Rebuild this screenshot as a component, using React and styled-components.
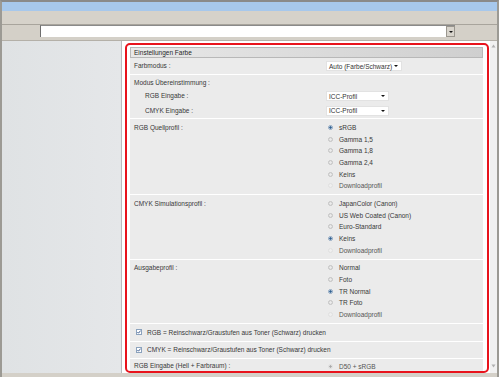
import React from "react";
import styled, { createGlobalStyle } from "styled-components";

const Global = createGlobalStyle`
  html, body { margin: 0; padding: 0; }
  body {
    width: 499px; height: 377px; overflow: hidden;
    font-family: "Liberation Sans", Arial, sans-serif;
    background: #d4d0c8;
  }
  * { box-sizing: border-box; }
`;

const Frame = styled.div`
  width: 499px; height: 377px;
  display: flex; flex-direction: column;
  border-top: 2px solid #8a8a8a;
  border-left: 2px solid #9c9a94;
  border-right: 2px solid #9c9a94;
  background: #d4d0c8;
`;

const TitleBar = styled.div`
  height: 9px; background: #a7c8ec;
`;

const MenuBar = styled.div`
  height: 13px; background: #d6d2ca;
`;

const ToolRow = styled.div`
  height: 16px;
  border-top: 1px solid #a8a49c;
  display: flex; align-items: flex-start;
  padding: 0 0 0 38px;
  background: #d4d0c8;
`;

const AddressBox = styled.div`
  width: 415px; height: 12px;
  display: flex;
  background: #fff;
  border-left: 1px solid #6e6e6e;
  border-top: 1px solid #8a8a8a;
`;

const AddressField = styled.div` flex: 1; `;

const DropButton = styled.div`
  width: 9px; height: 11px;
  background: #d8d4cc;
  border: 1px solid #9a968e;
  display: flex; align-items: center; justify-content: center;
`;

const Main = styled.div`
  height: 333px;
  display: flex;
  border-top: 1px solid #b4b0a8;
`;

const Sidebar = styled.div`
  width: 120px;
  background: linear-gradient(90deg, #dfe2e4, #e5e7e9);
  border-right: 1px solid #b9bbbd;
`;

const Content = styled.div`
  flex: 1;
  background: #fff;
  padding: 2px 1px 0 3px;
`;

const Scrollbar = styled.div`
  width: 7px;
  background: #f1f1f1;
  display: flex; flex-direction: column; justify-content: space-between;
  align-items: center;
  padding: 3px 0 5px;
`;

const Panel = styled.div`
  height: 330px;
  border: 2px solid #e8131c;
  border-radius: 5px;
  background: #fff;
  padding: 2px 4px 0 3px;
  overflow: hidden;
  color: #383838;
  font-size: 6.5px;
`;

const Header = styled.div`
  height: 11px;
  border: 1px solid #b8b8b8;
  background: linear-gradient(90deg, #e8e8e8, #cfcfcf);
  color: #262626;
  display: flex; align-items: center;
  padding-left: 3px;
`;

const Row = styled.div`
  display: grid;
  grid-template-columns: 196px 1fr;
  background: #ebebeb;
  border-bottom: 1px solid #ffffff;
  min-height: ${p => p.$h || 0}px;
  padding: ${p => p.$pad || "0"};
  align-items: ${p => p.$align || "center"};
`;

const Label = styled.div`
  padding-left: ${p => p.$indent || 4}px;
  line-height: ${p => p.$lh || 11.7}px;
`;

const Group = styled.div`
  background: #ebebeb;
  border-bottom: 1px solid #fff;
  padding-top: 2px;
`;

const SubRow = styled.div`
  display: grid;
  grid-template-columns: 196px 1fr;
  align-items: center;
  height: ${p => p.$h}px;
`;

const Select = styled.div`
  width: ${p => p.$w}px; height: 10px;
  background: #fff;
  border: 1px solid #e2e2e2;
  display: flex; align-items: center; justify-content: space-between;
  padding: 0 3px 0 2px;
  color: #333;
  white-space: nowrap;
`;

const Arrow = styled.span`
  width: 0; height: 0; flex: none;
  border-left: 2px solid transparent;
  border-right: 2px solid transparent;
  border-top: 2.5px solid #111;
`;

const Options = styled.div`
  display: flex; flex-direction: column;
`;

const Option = styled.div`
  display: flex; align-items: center;
  height: 11.7px;
  padding-left: 2px;
  gap: 6px;
  color: ${p => (p.$muted ? "#555" : "#383838")};
`;

const RadioDot = styled.span`
  width: 5px; height: 5px; border-radius: 50%;
  flex: none;
  border: 1px solid ${p => (p.$disabled ? "#e0e0e0" : p.$checked ? "#8ea6c0" : "#c2c2c2")};
  background: ${p =>
    p.$checked
      ? p.$disabled
        ? "radial-gradient(circle, #a8a8a8 45%, #dedede 55%)"
        : "radial-gradient(circle, #2e5f90 45%, #c9d8e8 55%)"
      : p.$disabled
      ? "#efefef"
      : "radial-gradient(circle, #ececec 30%, #d6d6d6 100%)"};
`;

const CheckRow = styled.div`
  display: flex; align-items: center; gap: 5px;
  height: 17.6px;
  padding-left: 6px;
  background: #ebebeb;
  border-bottom: 1px solid #fff;
`;

const CheckBox = styled.span`
  width: 6px; height: 6px; flex: none;
  background: #fff;
  border: 1px solid #8ba2bd;
  display: flex; align-items: center; justify-content: center;
`;

const ScrollArrow = ({ up }) => (
  <svg width="5" height="4" viewBox="0 0 5 4">
    <path d={up ? "M2.5 0.5 L4.5 3.5 L0.5 3.5 Z" : "M0.5 0.5 L4.5 0.5 L2.5 3.5 Z"} fill="#b0b0b0" />
  </svg>
);

const Tick = () => (
  <svg width="4" height="4" viewBox="0 0 4 4">
    <path d="M0.4 2 L1.5 3.2 L3.6 0.6" stroke="#2b4f86" strokeWidth="0.9" fill="none" />
  </svg>
);

const RadioList = ({ items }) => (
  <Options>
    {items.map(it => (
      <Option key={it.label} $muted={it.disabled}>
        <RadioDot $checked={it.checked} $disabled={it.disabled} />
        {it.label}
      </Option>
    ))}
  </Options>
);

const RadioSection = ({ title, items }) => (
  <Row $pad="2.5px 0" $align="start">
    <Label>{title}</Label>
    <RadioList items={items} />
  </Row>
);

export default function App() {
  return (
    <>
      <Global />
      <Frame>
        <TitleBar />
        <MenuBar />
        <ToolRow>
          <AddressBox>
            <AddressField />
            <DropButton><Arrow /></DropButton>
          </AddressBox>
        </ToolRow>
        <Main>
          <Sidebar />
          <Content>
            <Panel>
              <Header>Einstellungen Farbe</Header>
              <Row $h={17}>
                <Label>Farbmodus :</Label>
                <Select $w={76}>Auto (Farbe/Schwarz) <Arrow /></Select>
              </Row>
              <Group>
                <Label $lh={12}>Modus Übereinstimmung :</Label>
                <SubRow $h={14.5}>
                  <Label $indent={15}>RGB Eingabe :</Label>
                  <Select $w={63}>ICC-Profil <Arrow /></Select>
                </SubRow>
                <SubRow $h={14.5}>
                  <Label $indent={15}>CMYK Eingabe :</Label>
                  <Select $w={63}>ICC-Profil <Arrow /></Select>
                </SubRow>
              </Group>
              <RadioSection
                title="RGB Quellprofil :"
                items={[
                  { label: "sRGB", checked: true },
                  { label: "Gamma 1,5" },
                  { label: "Gamma 1,8" },
                  { label: "Gamma 2,4" },
                  { label: "Keins" },
                  { label: "Downloadprofil", disabled: true },
                ]}
              />
              <RadioSection
                title="CMYK Simulationsprofil :"
                items={[
                  { label: "JapanColor (Canon)" },
                  { label: "US Web Coated (Canon)" },
                  { label: "Euro-Standard" },
                  { label: "Keins", checked: true },
                  { label: "Downloadprofil", disabled: true },
                ]}
              />
              <RadioSection
                title="Ausgabeprofil :"
                items={[
                  { label: "Normal" },
                  { label: "Foto" },
                  { label: "TR Normal", checked: true },
                  { label: "TR Foto" },
                  { label: "Downloadprofil", disabled: true },
                ]}
              />
              <CheckRow>
                <CheckBox><Tick /></CheckBox>
                RGB = Reinschwarz/Graustufen aus Toner (Schwarz) drucken
              </CheckRow>
              <CheckRow>
                <CheckBox><Tick /></CheckBox>
                CMYK = Reinschwarz/Graustufen aus Toner (Schwarz) drucken
              </CheckRow>
              <Row $pad="1px 0" $align="start">
                <Label>RGB Eingabe (Hell + Farbraum) :</Label>
                <RadioList items={[{ label: "D50 + sRGB", checked: true, disabled: true }]} />
              </Row>
            </Panel>
          </Content>
          <Scrollbar>
            <ScrollArrow up />
            <ScrollArrow />
          </Scrollbar>
        </Main>
      </Frame>
    </>
  );
}
